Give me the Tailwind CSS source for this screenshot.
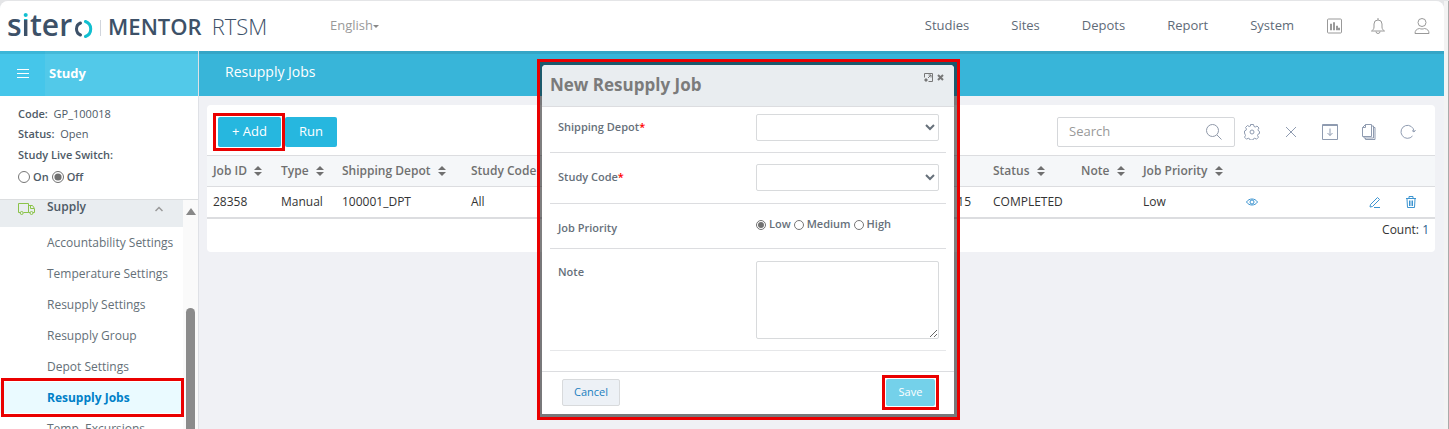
<!DOCTYPE html>
<html lang="en">

<head>
  <meta charset="UTF-8">
  <title>Mentor RTSM - Resupply Jobs</title>
  <script src="https://cdn.jsdelivr.net/npm/@tailwindcss/browser@4"></script>
</head>

<body class="h-screen overflow-hidden flex bg-[#e4e5e7] pt-px font-['Open_Sans','Noto_Sans',sans-serif] text-xs text-[#4e5a66]">
  <div class="flex-1 min-w-0 flex flex-col bg-[#f0f1f5] rounded-t-lg overflow-hidden">

    <!-- Top bar -->
    <header class="h-[50px] shrink-0 bg-white flex items-center pl-[7px] pr-3.5">
      <div class="flex items-center w-[323px] text-[#3d5168]">
        <div class="flex items-center h-8 mb-0.5 text-[30px] leading-8 font-semibold" aria-label="sitero">
          <span>s</span><span class="bg-linear-to-b from-[#12bfd0] from-35% to-[#3d5168] to-35% bg-clip-text text-transparent">i</span><span>ter</span>
          <svg class="w-[19px] h-[18px] mt-2 ml-0.5" viewBox="0 0 19 18" fill="none" stroke-width="3" stroke-linecap="round">
            <path d="M6.500 3A6.500 6.500 0 0 0 6.500 15" stroke="#3d5168" />
            <path d="M11.500 1.500A8 8 0 0 1 11.500 16.500" stroke="#12bfd0" />
          </svg>
        </div>
        <span class="w-px h-4 bg-gray-300 mx-[7px] mt-1"></span>
        <span class="flex gap-2.5 text-[22px] leading-8"><span class="font-semibold">MENTOR</span><span class="font-light">RTSM</span></span>
      </div>
      <button class="flex items-center text-[13px] text-[#999]">English
        <span class="border-x-[3px] border-x-transparent border-t-[3px] border-t-[#888] mt-0.5"></span>
      </button>
      <nav class="ml-auto flex items-center gap-[42px] text-[13px] text-[#5f6b78]">
        <a href="#">Studies</a>
        <a href="#">Sites</a>
        <a href="#">Depots</a>
        <a href="#">Report</a>
        <a href="#">System</a>
      </nav>
      <div class="flex items-center gap-7 ml-8 text-[#999]">
        <button aria-label="Charts">
          <svg class="w-4 h-4" viewBox="0 0 16 16" fill="none" stroke="currentColor">
            <rect x="1.500" y="1" width="14" height="14" rx="1" />
            <path d="M4.500 12V6h1v6zM7.500 12V4.500h1V12zM10.500 12V8h1v4zM12.500 12v-2h1v2z" />
          </svg>
        </button>
        <button aria-label="Notifications">
          <svg class="w-4 h-4" viewBox="0 0 16 16" fill="none" stroke="currentColor">
            <path d="M1.500 13h13c-1.500-1-2.500-2-2.500-4V6a4 4 0 0 0-8 0V9c0 2-1 3-2.500 4zM6 13.500a2 2 0 0 0 4 0M8 2V0" />
          </svg>
        </button>
        <button aria-label="Account">
          <svg class="w-4 h-4" viewBox="0 0 16 16" fill="none" stroke="currentColor">
            <circle cx="8" cy="4.500" r="4" />
            <path d="M1 15.500c0-3 1.500-4.500 4.500-5 1.500.7 3.500.7 5 0 3 .5 4.500 2 4.500 5z" />
          </svg>
        </button>
      </div>
    </header>

    <div class="flex-1 min-h-0 flex">
      <!-- Sidebar -->
      <aside class="w-[199px] shrink-0 flex flex-col bg-white border-r border-[#dfe1e6]">
        <div class="h-[45px] shrink-0 flex bg-[#52c9e9] text-white shadow-[inset_0_3px_0_#45b9d8]">
          <button class="w-[45px] flex items-center justify-center bg-[#45c6ea] shadow-[inset_0_3px_0_#3bb6d8]" aria-label="Toggle menu">
            <svg class="w-3 h-3" viewBox="0 0 12 12" stroke="currentColor"><path d="M0 1.500h12M0 5.500h12M0 9.500h12" /></svg>
          </button>
          <h2 class="pl-1 text-[13px] font-bold leading-[45px]">Study</h2>
        </div>
        <div class="h-[104px] shrink-0 border-b border-[#dcdee0] pl-[18px] pt-2 text-[11px] leading-5">
          <p><span class="font-semibold">Code:</span>&nbsp; GP_100018</p>
          <p><span class="font-semibold">Status:</span>&nbsp; Open</p>
          <fieldset>
            <legend class="font-semibold leading-[22px]">Study Live Switch:</legend>
            <div class="flex items-center leading-[22px] gap-[3px] font-semibold">
              <input type="radio" id="live-on" name="live" class="w-3 h-3 accent-[#707070]">
              <label for="live-on">On</label>
              <input type="radio" id="live-off" name="live" checked class="w-3 h-3 accent-[#707070]">
              <label for="live-off">Off</label>
            </div>
          </fieldset>
        </div>
        <div class="flex-1 min-h-0 flex">
          <nav class="flex-1 text-[#647078]">
            <button class="w-full h-[27px] pb-3.5 pl-[18px] pr-5 flex items-center bg-[#e9edf0] font-semibold text-[#4e5a66]">
              <svg class="w-[17px] h-3 mt-1 mr-3" viewBox="0 0 17 12" fill="none" stroke="#8bc34a">
                <path d="M2 9.500H.5v-9h10v9h-5M10.500 2.500h4l2 3v4h-1.500M12 9.500h-1.500M12.500 3v2.500h3.500" />
                <circle cx="3.700" cy="10" r="1.500" />
                <circle cx="13.500" cy="10" r="1.500" />
              </svg>
              Supply
              <svg class="w-2 h-2 mt-1 ml-auto" viewBox="0 0 8 8" fill="none" stroke="#999" stroke-width="1.500"><path d="M.5 6 4 2.500 7.500 6" /></svg>
            </button>
            <ul class="leading-[31px]">
              <li><a href="#" class="block pl-[47px]">Accountability Settings</a></li>
              <li><a href="#" class="block pl-[47px]">Temperature Settings</a></li>
              <li><a href="#" class="block pl-[47px]">Resupply Settings</a></li>
              <li><a href="#" class="block pl-[47px]">Resupply Group</a></li>
              <li><a href="#" class="block pl-[47px]">Depot Settings</a></li>
              <li class="relative">
                <a href="#" class="block pl-[47px] bg-[#eafaff] font-bold text-[#0080c8]">Resupply Jobs</a>
                <span class="absolute left-px -right-px -inset-y-1 border-3 border-[#ea0000] pointer-events-none"></span>
              </li>
              <li><a href="#" class="block pl-[47px]">Temp. Excursions</a></li>
            </ul>
          </nav>
          <div class="w-[15px] bg-[#fafafa] flex flex-col items-center pt-2">
            <span class="border-x-[5px] border-x-transparent border-b-[7px] border-b-[#888]"></span>
            <span class="w-[9px] flex-1 mt-[93px] rounded-t-full bg-[#8b8b8b]"></span>
          </div>
        </div>
      </aside>

      <!-- Content -->
      <main class="flex-1 min-w-0">
        <h1 class="h-[45px] pl-[26px] bg-[#38b5d9] shadow-[inset_0_3px_0_#35a5c6] text-sm leading-[42px] text-white">Resupply Jobs</h1>
        <section class="mt-[9px] ml-2 mr-[9px] bg-white rounded h-[147px]">
          <div class="h-[50px] pt-1 pl-[11px] pr-[19px] flex items-center">
            <div class="relative mr-1">
              <button class="block w-[63px] h-[30px] rounded-xs bg-[#26b7df] text-[13px] text-white">+ Add</button>
              <span class="absolute -left-[5px] -right-1 -inset-y-1 border-3 border-[#ea0000] pointer-events-none"></span>
            </div>
            <button class="w-[52px] h-[30px] rounded-xs bg-[#26b7df] text-[13px] text-white">Run</button>
            <div class="ml-auto flex items-center w-[178px] h-[30px] mr-[9px] pl-[11px] pr-3 border border-[#d5d7da] rounded-xs">
              <input type="text" aria-label="Search" placeholder="Search" class="w-full text-[13px] placeholder:text-[#999] outline-none">
              <svg class="w-4 h-4 shrink-0" viewBox="0 0 16 16" fill="none" stroke="#8f98a8"><circle cx="6.500" cy="6.500" r="6" /><path d="m11 11 4.500 4.500" /></svg>
            </div>
            <div class="flex items-center gap-[23px] text-[#8f9bb0]">
              <button aria-label="Settings">
                <svg class="block w-4 h-4" viewBox="0 0 16 16" fill="none" stroke="currentColor">
                  <path d="M6.500.5h3l.5 2 1.300.5 1.700-1 2 2-1 1.700.5 1.300 1 .5v2l-1.500.7-.5 1.300 1 1.700-2 2-1.700-1-1.300.5-.5 1.300h-3l-.5-1.300-1.300-.5-1.700 1-2-2 1-1.700-.5-1.300L.5 9V7l1.500-.7.5-1.300-1-1.500 2-2 1.700 1 1.300-.5z" />
                  <circle cx="8" cy="8" r="2" />
                </svg>
              </button>
              <button aria-label="Clear">
                <svg class="block w-4 h-4" viewBox="0 0 16 16" stroke="currentColor"><path d="m3 3 10 10M13 3 3 13" /></svg>
              </button>
              <button aria-label="Download">
                <svg class="block w-4 h-4" viewBox="0 0 16 16" fill="none" stroke="currentColor"><path d="M.5.5h15v15H.5zM.5 1.500h15M8 4.500v7M5.500 9 8 11.500 10.500 9" /></svg>
              </button>
              <button aria-label="Copy">
                <svg class="block w-4 h-4" viewBox="0 0 16 16" fill="none" stroke="currentColor"><path d="M4.500.5h6v12h-9v-9zM4.500.5v3h-3M3 12.500V14h9.500V2H11M4.500 14v1.500H14V3.500h-1" /></svg>
              </button>
              <button aria-label="Refresh">
                <svg class="block w-4 h-4" viewBox="0 0 16 16" fill="none" stroke="currentColor"><path d="M12.500 12A6.500 6.500 0 1 1 14 7.500M12 6.500l2 1.500 1.500-2" /></svg>
              </button>
            </div>
          </div>

          <table class="w-full table-fixed text-left text-[#333]">
            <colgroup>
              <col class="w-[68px]">
              <col class="w-[61px]">
              <col class="w-[129px]">
              <col class="w-[122px]">
              <col class="w-[400px]">
              <col class="w-[88px]">
              <col class="w-[62px]">
              <col class="w-[98px]">
              <col>
            </colgroup>
            <thead class="bg-[#f5f7f9] border-y border-[#dcdde0] text-[#707070]">
              <tr class="h-[31px]">
                <th class="pl-1.5 font-semibold whitespace-nowrap">Job ID <svg class="inline w-2 h-2.5 ml-1 mb-0.5" viewBox="0 0 8 10" fill="currentColor"><path d="M4 0l4 4H0zM4 10l4-4H0z" /></svg></th>
                <th class="pl-1.5 font-semibold whitespace-nowrap">Type <svg class="inline w-2 h-2.5 ml-1 mb-0.5" viewBox="0 0 8 10" fill="currentColor"><path d="M4 0l4 4H0zM4 10l4-4H0z" /></svg></th>
                <th class="pl-1.5 font-semibold whitespace-nowrap">Shipping Depot <svg class="inline w-2 h-2.5 ml-1 mb-0.5" viewBox="0 0 8 10" fill="currentColor"><path d="M4 0l4 4H0zM4 10l4-4H0z" /></svg></th>
                <th class="pl-1.5 font-semibold whitespace-nowrap">Study Code</th>
                <th></th>
                <th class="pl-1.5 font-semibold whitespace-nowrap">Status <svg class="inline w-2 h-2.5 ml-1 mb-0.5" viewBox="0 0 8 10" fill="currentColor"><path d="M4 0l4 4H0zM4 10l4-4H0z" /></svg></th>
                <th class="pl-1.5 font-semibold whitespace-nowrap">Note <svg class="inline w-2 h-2.5 ml-1 mb-0.5" viewBox="0 0 8 10" fill="currentColor"><path d="M4 0l4 4H0zM4 10l4-4H0z" /></svg></th>
                <th class="pl-1.5 font-semibold whitespace-nowrap">Job Priority <svg class="inline w-2 h-2.5 ml-1 mb-0.5" viewBox="0 0 8 10" fill="currentColor"><path d="M4 0l4 4H0zM4 10l4-4H0z" /></svg></th>
                <th></th>
              </tr>
            </thead>
            <tbody>
              <tr class="h-[31px] border-b-2 border-[#dcdde0]">
                <td class="pl-1.5">28358</td>
                <td class="pl-1.5">Manual</td>
                <td class="pl-1.5">100001_DPT</td>
                <td class="pl-1.5">All</td>
                <td class="pr-4 text-right">15</td>
                <td class="pl-1.5">COMPLETED</td>
                <td class="pl-1.5"></td>
                <td class="pl-1.5">Low</td>
                <td>
                  <div class="flex items-center pl-[11px] pr-[18px] gap-6 text-[#3c94d0]">
                    <button class="mr-auto" aria-label="View">
                      <svg class="block w-3 h-3" viewBox="0 0 12 12" fill="none" stroke="currentColor"><path d="M.5 6C3 2 9 2 11.500 6 9 10 3 10 .5 6z" /><circle cx="6" cy="6" r="2" /></svg>
                    </button>
                    <button aria-label="Edit">
                      <svg class="block w-3 h-3" viewBox="0 0 12 12" fill="none" stroke="currentColor"><path d="M1.500 8.500 8.500 1.500l2 2-7 7-2.500.5zM5 11.500h6" /></svg>
                    </button>
                    <button aria-label="Delete">
                      <svg class="block w-3 h-3" viewBox="0 0 12 12" fill="none" stroke="currentColor"><path d="M1 2.500h10M4 2V.5h4V2M2 3l.5 8.500h7L10 3M4.500 4.500v5.500M6 4.500v5.500M7.500 4.500v5.500" /></svg>
                    </button>
                  </div>
                </td>
              </tr>
            </tbody>
          </table>
          <p class="pr-1.5 text-right leading-[22px] text-[#333]">Count: <span class="text-[#2b5f8c]">1</span></p>
        </section>
      </main>
    </div>
  </div>
  <div class="w-[5px] border-r border-[#aaa] bg-[#f3f3f3]"></div>

  <!-- New job dialog -->
  <div class="absolute left-[537px] top-[59px] w-[423px] border-3 border-[#ea0000] bg-black/50 p-[3px] pl-0.5">
    <form class="bg-white rounded-t-sm text-[11px] font-semibold text-[#66707a]">
      <div class="h-[42px] pl-2 pr-2.5 flex items-center justify-between bg-[#e9edf0] border-b border-[#dcdde0] rounded-t-sm">
        <h2 class="text-[17px] font-bold text-[#7b7b7b]">New Resupply Job</h2>
        <div class="flex items-center gap-1 mb-4 text-[#777]">
          <button type="button" aria-label="Maximize">
            <svg class="block w-[9px] h-[9px]" viewBox="0 0 9 9" fill="none" stroke="currentColor"><path d="M.5 4.500v-4h8v8h-4M4 5l3-3M4.500 2H7v2.500" /><path d="M1 6h2v2H1z" fill="currentColor" /></svg>
          </button>
          <button type="button" aria-label="Close">
            <svg class="block w-[7px] h-[7px]" viewBox="0 0 7 7" stroke="currentColor" stroke-width="2"><path d="m1 1 5 5M6 1 1 6" /></svg>
          </button>
        </div>
      </div>
      <div class="px-2 pb-5">
        <div class="flex h-[46px] items-center pb-1 pl-2 pr-[7px] border-b border-[#dcdde0]">
          <label for="depot" class="w-[198px]">Shipping Depot<span class="text-[#f00]">*</span></label>
          <select id="depot" class="flex-1 h-[27px] border border-[#d8dadc] rounded-xs bg-white"><option></option></select>
        </div>
        <div class="flex h-[51px] items-center pb-px pl-2 pr-[7px] border-b border-[#dcdde0]">
          <label for="study-code" class="w-[198px]">Study Code<span class="text-[#f00]">*</span></label>
          <select id="study-code" class="flex-1 h-[27px] border border-[#d8dadc] rounded-xs bg-white"><option></option></select>
        </div>
        <fieldset class="h-[45px] pl-2 pr-[7px] border-b border-[#dcdde0]">
          <legend class="float-left w-[198px] leading-[47px]">Job Priority</legend>
          <div class="flex items-center h-[41px] gap-[3px]">
            <input type="radio" id="low" name="priority" checked class="w-2.5 h-2.5 accent-[#707070]">
            <label for="low">Low</label>
            <input type="radio" id="medium" name="priority" class="w-2.5 h-2.5">
            <label for="medium">Medium</label>
            <input type="radio" id="high" name="priority" class="w-2.5 h-2.5">
            <label for="high">High</label>
          </div>
        </fieldset>
        <div class="flex h-[102px] pt-3 pl-2 pr-[7px] border-b border-[#e6e7e9]">
          <label for="note" class="w-[198px] pt-1">Note</label>
          <textarea id="note" class="flex-1 h-[78px] border border-[#d8dadc] rounded-xs"></textarea>
        </div>
      </div>
      <div class="h-[43px] pb-0.5 pl-5 pr-[19px] flex items-center justify-between border-t border-[#dcdde0]">
        <button type="button" class="w-[58px] h-[27px] border border-[#d8dadc] rounded-xs bg-[#edf1f6] font-medium text-[#1a80c0]">Cancel</button>
        <div class="relative">
          <button type="submit" class="block w-[49px] h-[27px] rounded-xs bg-[#74d1ea] font-medium text-white">Save</button>
          <span class="absolute -inset-1 border-3 border-[#ea0000] pointer-events-none"></span>
        </div>
      </div>
    </form>
  </div>
</body>

</html>
